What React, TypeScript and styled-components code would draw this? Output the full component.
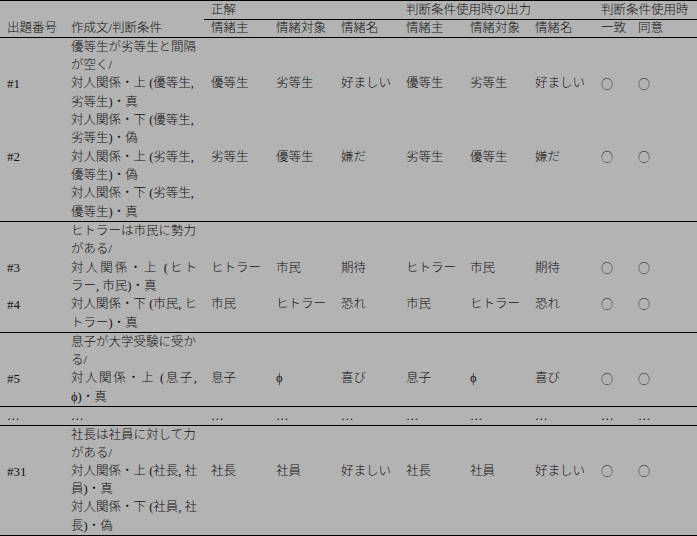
import React from 'react';
import styled, { createGlobalStyle } from 'styled-components';

const GlobalStyle = createGlobalStyle`
  *, *::before, *::after {
    box-sizing: border-box;
  }
  html, body {
    margin: 0;
    padding: 0;
    background: #b3b3b3;
  }
`;

const COLUMNS = '64px 140px 65px 65px 65px 64px 65px 66px 37px 66px';

interface Entry {
  at: number;
  cells: string[];
}

interface Group {
  height: number;
  sentence: string[];
  justify?: number[];
  entries: Entry[];
}

const groups: Group[] = [
  {
    height: 183,
    sentence: [
      '優等生が劣等生と間隔',
      'が空く/',
      '対人関係・上 (優等生,',
      '劣等生)・真',
      '対人関係・下 (優等生,',
      '劣等生)・偽',
      '対人関係・上 (劣等生,',
      '優等生)・偽',
      '対人関係・下 (劣等生,',
      '優等生)・真',
    ],
    entries: [
      { at: 2, cells: ['#1', '優等生', '劣等生', '好ましい', '優等生', '劣等生', '好ましい', '○', '○'] },
      { at: 6, cells: ['#2', '劣等生', '優等生', '嫌だ', '劣等生', '優等生', '嫌だ', '○', '○'] },
    ],
  },
  {
    height: 110,
    sentence: ['ヒトラーは市民に勢力', 'がある/', '対人関係・上 (ヒト', 'ラー, 市民)・真', '対人関係・下 (市民, ヒ', 'トラー)・真'],
    justify: [2],
    entries: [
      { at: 2, cells: ['#3', 'ヒトラー', '市民', '期待', 'ヒトラー', '市民', '期待', '○', '○'] },
      { at: 4, cells: ['#4', '市民', 'ヒトラー', '恐れ', '市民', 'ヒトラー', '恐れ', '○', '○'] },
    ],
  },
  {
    height: 73,
    sentence: ['息子が大学受験に受か', 'る/', '対人関係・上 (息子,', 'ϕ)・真'],
    justify: [2],
    entries: [{ at: 2, cells: ['#5', '息子', 'ϕ', '喜び', '息子', 'ϕ', '喜び', '○', '○'] }],
  },
  {
    height: 18,
    sentence: ['…'],
    entries: [{ at: 0, cells: ['…', '…', '…', '…', '…', '…', '…', '…', '…'] }],
  },
  {
    height: 109,
    sentence: ['社長は社員に対して力', 'がある/', '対人関係・上 (社長, 社', '員)・真', '対人関係・下 (社員, 社', '長)・偽'],
    entries: [{ at: 2, cells: ['#31', '社長', '社員', '好ましい', '社長', '社員', '好ましい', '○', '○'] }],
  },
];

const Table = styled.div`
  width: 697px;
  border-top: 1px solid #000;
  border-bottom: 1px solid #000;
  font-family: 'Liberation Serif', 'Noto Sans CJK JP', serif;
  font-size: 12.5px;
  font-weight: 300;
  color: #111;
`;

const HeadRow = styled.div<{ $height: number }>`
  display: grid;
  grid-template-columns: ${COLUMNS};
  height: ${(p) => p.$height}px;
`;

const HeadCell = styled.div<{ $col: number; $rule?: boolean; $span?: number }>`
  grid-column: ${(p) => p.$col} / span ${(p) => p.$span ?? 1};
  display: flex;
  align-items: center;
  padding-left: 7px;
  white-space: nowrap;
  line-height: 1;
  border-bottom: ${(p) => (p.$rule ? '1px solid #000' : 'none')};
`;

const Section = styled.div<{ $height: number; $lines: number }>`
  display: grid;
  grid-template-columns: ${COLUMNS};
  grid-template-rows: repeat(${(p) => p.$lines}, 1fr);
  height: ${(p) => p.$height}px;
  border-top: 1px solid #000;
`;

const Cell = styled.div<{ $row: number; $col: number }>`
  grid-row: ${(p) => p.$row};
  grid-column: ${(p) => p.$col};
  display: flex;
  align-items: center;
  padding-left: 7px;
  white-space: nowrap;
  line-height: 1;
`;

const Line = styled.span<{ $justify?: boolean }>`
  display: block;
  width: ${(p) => (p.$justify ? '126px' : 'auto')};
  text-align: ${(p) => (p.$justify ? 'justify' : 'left')};
  text-align-last: ${(p) => (p.$justify ? 'justify' : 'auto')};
  white-space: ${(p) => (p.$justify ? 'normal' : 'nowrap')};
`;

const Latin = styled.span`
  font-size: 13px;
`;

const Mark = styled.span`
  font-family: 'Noto Sans CJK JP', sans-serif;
  font-size: 12px;
`;

const dataColumns = [1, 3, 4, 5, 6, 7, 8, 9, 10];

const renderValue = (text: string) => {
  if (text === '○') return <Mark>{text}</Mark>;
  if (text.startsWith('#')) return <Latin>{text}</Latin>;
  return text;
};

const App: React.FC = () => {
  return (
    <>
      <GlobalStyle />
      <Table>
        <HeadRow $height={19}>
          <HeadCell $col={1} />
          <HeadCell $col={2} />
          <HeadCell $col={3} $span={3} $rule>
            正解
          </HeadCell>
          <HeadCell $col={6} $span={3} $rule>
            判断条件使用時の出力
          </HeadCell>
          <HeadCell $col={9} $span={2} $rule>
            判断条件使用時
          </HeadCell>
        </HeadRow>
        <HeadRow $height={17}>
          {['出題番号', '作成文/判断条件', '情緒主', '情緒対象', '情緒名', '情緒主', '情緒対象', '情緒名', '一致', '同意'].map(
            (label, i) => (
              <HeadCell key={i} $col={i + 1}>
                {label}
              </HeadCell>
            )
          )}
        </HeadRow>
        {groups.map((group, g) => (
          <Section key={g} $height={group.height + 1} $lines={group.sentence.length}>
            {group.sentence.map((text, i) => (
              <Cell key={`s${i}`} $row={i + 1} $col={2}>
                <Line $justify={group.justify?.includes(i)}>{text}</Line>
              </Cell>
            ))}
            {group.entries.map((entry) =>
              entry.cells.map((text, c) => (
                <Cell key={`${entry.at}-${c}`} $row={entry.at + 1} $col={dataColumns[c]}>
                  {renderValue(text)}
                </Cell>
              ))
            )}
          </Section>
        ))}
      </Table>
    </>
  );
};

export default App;
